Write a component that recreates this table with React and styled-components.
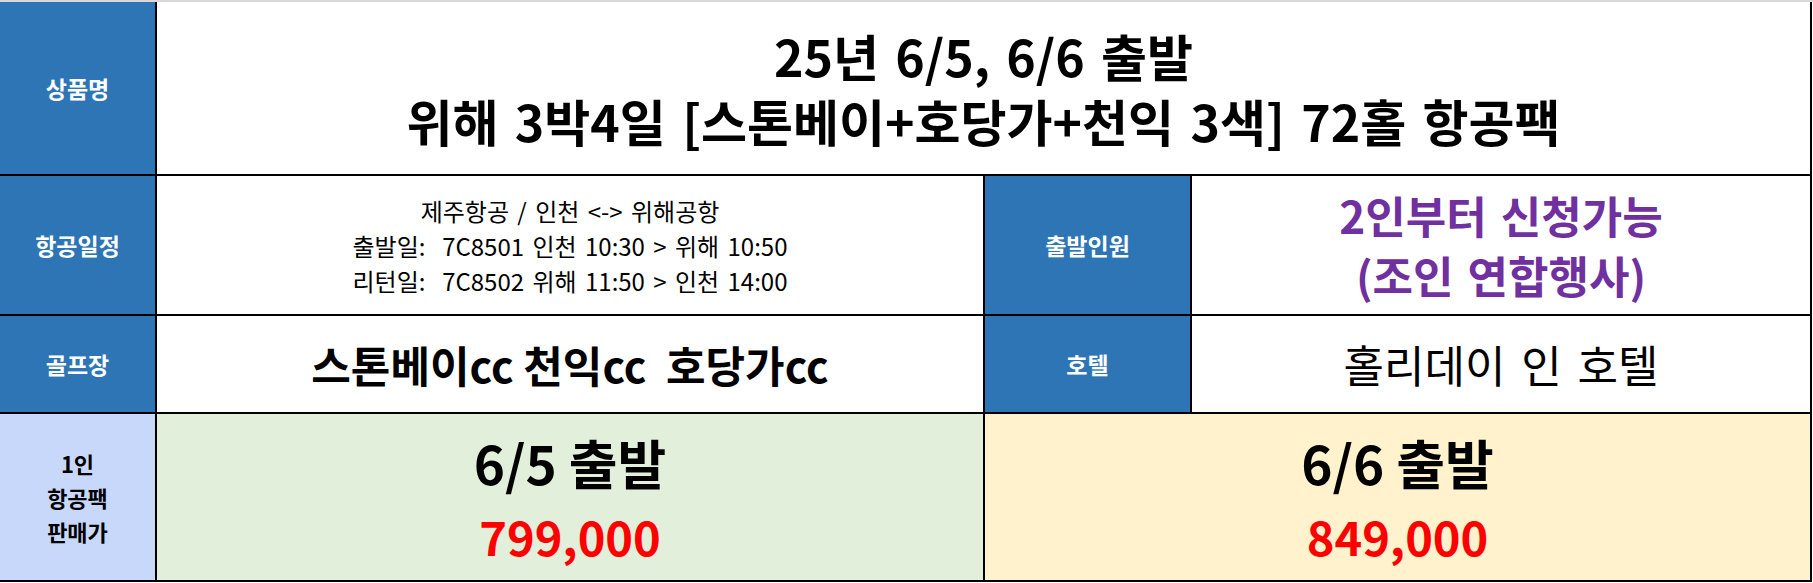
import React from 'react'
import styled, { createGlobalStyle } from 'styled-components'

const GlobalStyle = createGlobalStyle`
    html, body {
        margin: 0;
        padding: 0;
        background: #ffffff;
    }
    body {
        font-family: "Noto Sans CJK KR", "Noto Sans", sans-serif;
        color: #000000;
    }
    * {
        box-sizing: border-box;
    }
`

const Sheet = styled.div`
    width: 1813px;
    height: 583px;
    border-top: 2px solid #d9d9d9;
    display: grid;
    grid-template-columns: 157px 828px 207px 620px;
    grid-template-rows: 174px 140px 98px 168px;
`

const Cell = styled.div`
    display: flex;
    flex-direction: column;
    align-items: center;
    justify-content: center;
    gap: ${({ gap }) => gap || 0}px;
    text-align: center;
    border-right: 2px solid #000;
    border-bottom: 2px solid #000;
    background: ${({ bg }) => bg || '#ffffff'};
    grid-column: ${({ span }) => (span ? `span ${span}` : 'auto')};
    white-space: nowrap;
`

const Label = styled(Cell)`
    background: ${({ light }) => (light ? '#c8d8fb' : '#2e75b6')};
    color: ${({ light }) => (light ? '#000000' : '#ffffff')};
    font-size: ${({ light }) => (light ? 22 : 23)}px;
    font-weight: 700;
    line-height: 34px;
`

const Title = styled.div`
    font-size: 50px;
    font-weight: 700;
    line-height: 65px;
    word-spacing: 5px;
`

const Flight = styled.div`
    font-size: 24px;
    font-weight: 400;
    line-height: 35px;
    white-space: pre;
    word-spacing: 3px;
`

const Notice = styled.div`
    color: #7030a0;
    font-size: 44px;
    font-weight: 700;
    line-height: 60px;
    word-spacing: 4px;
`

const Big = styled.div`
    font-size: ${({ size }) => size || 42}px;
    font-weight: ${({ bold }) => (bold ? 700 : 400)};
    white-space: pre;
    word-spacing: ${({ bold }) => (bold ? 0 : 6)}px;
`

const Price = styled.div`
    font-size: ${({ red }) => (red ? 47 : 53)}px;
    font-weight: 700;
    line-height: 1;
    color: ${({ red }) => (red ? '#ff0000' : '#000000')};
`

const flights = [
    '제주항공 / 인천 <-> 위해공항',
    '출발일:  7C8501 인천 10:30 > 위해 10:50',
    '리턴일:  7C8502 위해 11:50 > 인천 14:00',
]

const departures = [
    { date: '6/5 출발', price: '799,000', bg: '#e2efda', span: 1 },
    { date: '6/6 출발', price: '849,000', bg: '#fff2cc', span: 2 },
]

export default function App() {
    return (
        <>
            <GlobalStyle />
            <Sheet>
                <Label>상품명</Label>
                <Cell span={3}>
                    <Title>25년 6/5, 6/6 출발</Title>
                    <Title>위해 3박4일 [스톤베이+호당가+천익 3색] 72홀 항공팩</Title>
                </Cell>

                <Label>항공일정</Label>
                <Cell>
                    {flights.map((line, i) => (
                        <Flight key={i}>{line}</Flight>
                    ))}
                </Cell>
                <Label>출발인원</Label>
                <Cell>
                    <Notice>2인부터 신청가능</Notice>
                    <Notice>(조인 연합행사)</Notice>
                </Cell>

                <Label>골프장</Label>
                <Cell>
                    <Big bold size={43}>{'스톤베이cc 천익cc  호당가cc'}</Big>
                </Cell>
                <Label>호텔</Label>
                <Cell>
                    <Big size={44}>홀리데이 인 호텔</Big>
                </Cell>

                <Label light>
                    <div>1인</div>
                    <div>항공팩</div>
                    <div>판매가</div>
                </Label>
                {departures.map((d) => (
                    <Cell key={d.date} bg={d.bg} span={d.span} gap={23}>
                        <Price>{d.date}</Price>
                        <Price red>{d.price}</Price>
                    </Cell>
                ))}
            </Sheet>
        </>
    )
}
